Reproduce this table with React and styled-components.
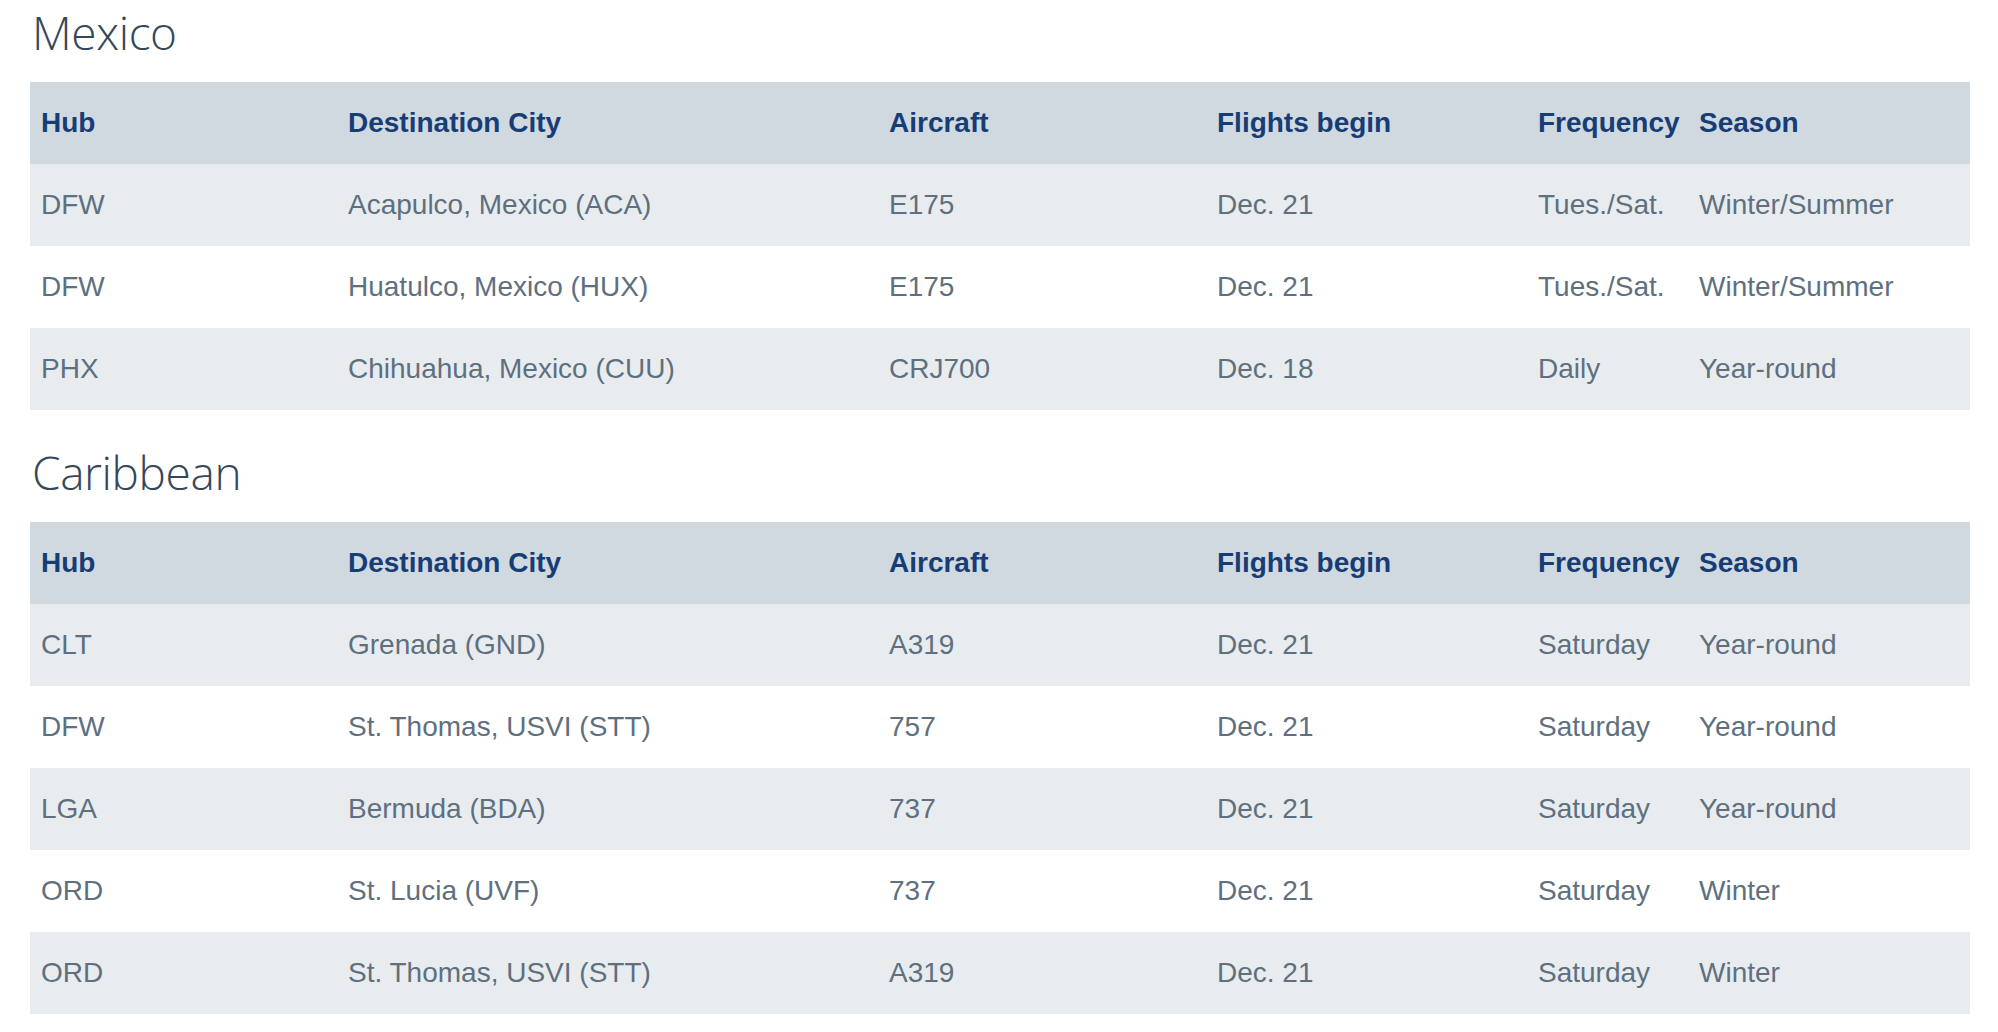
import styled, { createGlobalStyle } from 'styled-components';

const GlobalStyle = createGlobalStyle`
    html, body {
        margin: 0;
        padding: 0;
        background: #ffffff;
    }
`;

const Page = styled.div`
    padding: 0 28px 0 30px;
    font-family: 'Liberation Sans', Arial, sans-serif;
`;

const Section = styled.section`
    & + & {
        margin-top: 30px;
    }
`;

const Title = styled.h2`
    margin: 0 0 18px 0;
    padding-left: 2px;
    font-family: 'Open Sans', 'Noto Sans', sans-serif;
    font-weight: 300;
    font-size: 46px;
    line-height: 64px;
    letter-spacing: -0.4px;
    color: #36475a;
`;

const Table = styled.table`
    width: 100%;
    border-collapse: collapse;
    table-layout: fixed;
`;

const Head = styled.th`
    height: 82px;
    padding: 0 0 0 11px;
    text-align: left;
    vertical-align: middle;
    font-size: 28px;
    font-weight: 700;
    color: #173d76;
    background: #d0d9df;
    white-space: nowrap;
`;

const Row = styled.tr`
    background: ${(p) => (p.$shaded ? '#e8ecef' : '#ffffff')};
`;

const Cell = styled.td`
    height: 82px;
    padding: 0 0 0 11px;
    vertical-align: middle;
    font-size: 28px;
    color: #5e707f;
    white-space: nowrap;
`;

const columns = [
    { label: 'Hub', width: 307 },
    { label: 'Destination City', width: 541 },
    { label: 'Aircraft', width: 328 },
    { label: 'Flights begin', width: 321 },
    { label: 'Frequency', width: 161 },
    { label: 'Season', width: 282 },
];

const mexico = [
    ['DFW', 'Acapulco, Mexico (ACA)', 'E175', 'Dec. 21', 'Tues./Sat.', 'Winter/Summer'],
    ['DFW', 'Huatulco, Mexico (HUX)', 'E175', 'Dec. 21', 'Tues./Sat.', 'Winter/Summer'],
    ['PHX', 'Chihuahua, Mexico (CUU)', 'CRJ700', 'Dec. 18', 'Daily', 'Year-round'],
];

const caribbean = [
    ['CLT', 'Grenada (GND)', 'A319', 'Dec. 21', 'Saturday', 'Year-round'],
    ['DFW', 'St. Thomas, USVI (STT)', '757', 'Dec. 21', 'Saturday', 'Year-round'],
    ['LGA', 'Bermuda (BDA)', '737', 'Dec. 21', 'Saturday', 'Year-round'],
    ['ORD', 'St. Lucia (UVF)', '737', 'Dec. 21', 'Saturday', 'Winter'],
    ['ORD', 'St. Thomas, USVI (STT)', 'A319', 'Dec. 21', 'Saturday', 'Winter'],
];

const RouteTable = ({ title, rows }) => (
    <Section>
        <Title>{title}</Title>
        <Table>
            <colgroup>
                {columns.map((c) => (
                    <col key={c.label} style={{ width: c.width }} />
                ))}
            </colgroup>
            <thead>
                <tr>
                    {columns.map((c) => (
                        <Head key={c.label}>{c.label}</Head>
                    ))}
                </tr>
            </thead>
            <tbody>
                {rows.map((r, i) => (
                    <Row key={i} $shaded={i % 2 === 0}>
                        {r.map((v, j) => (
                            <Cell key={j}>{v}</Cell>
                        ))}
                    </Row>
                ))}
            </tbody>
        </Table>
    </Section>
);

const App = () => (
    <>
        <GlobalStyle />
        <Page>
            <RouteTable title="Mexico" rows={mexico} />
            <RouteTable title="Caribbean" rows={caribbean} />
        </Page>
    </>
);

export default App;
